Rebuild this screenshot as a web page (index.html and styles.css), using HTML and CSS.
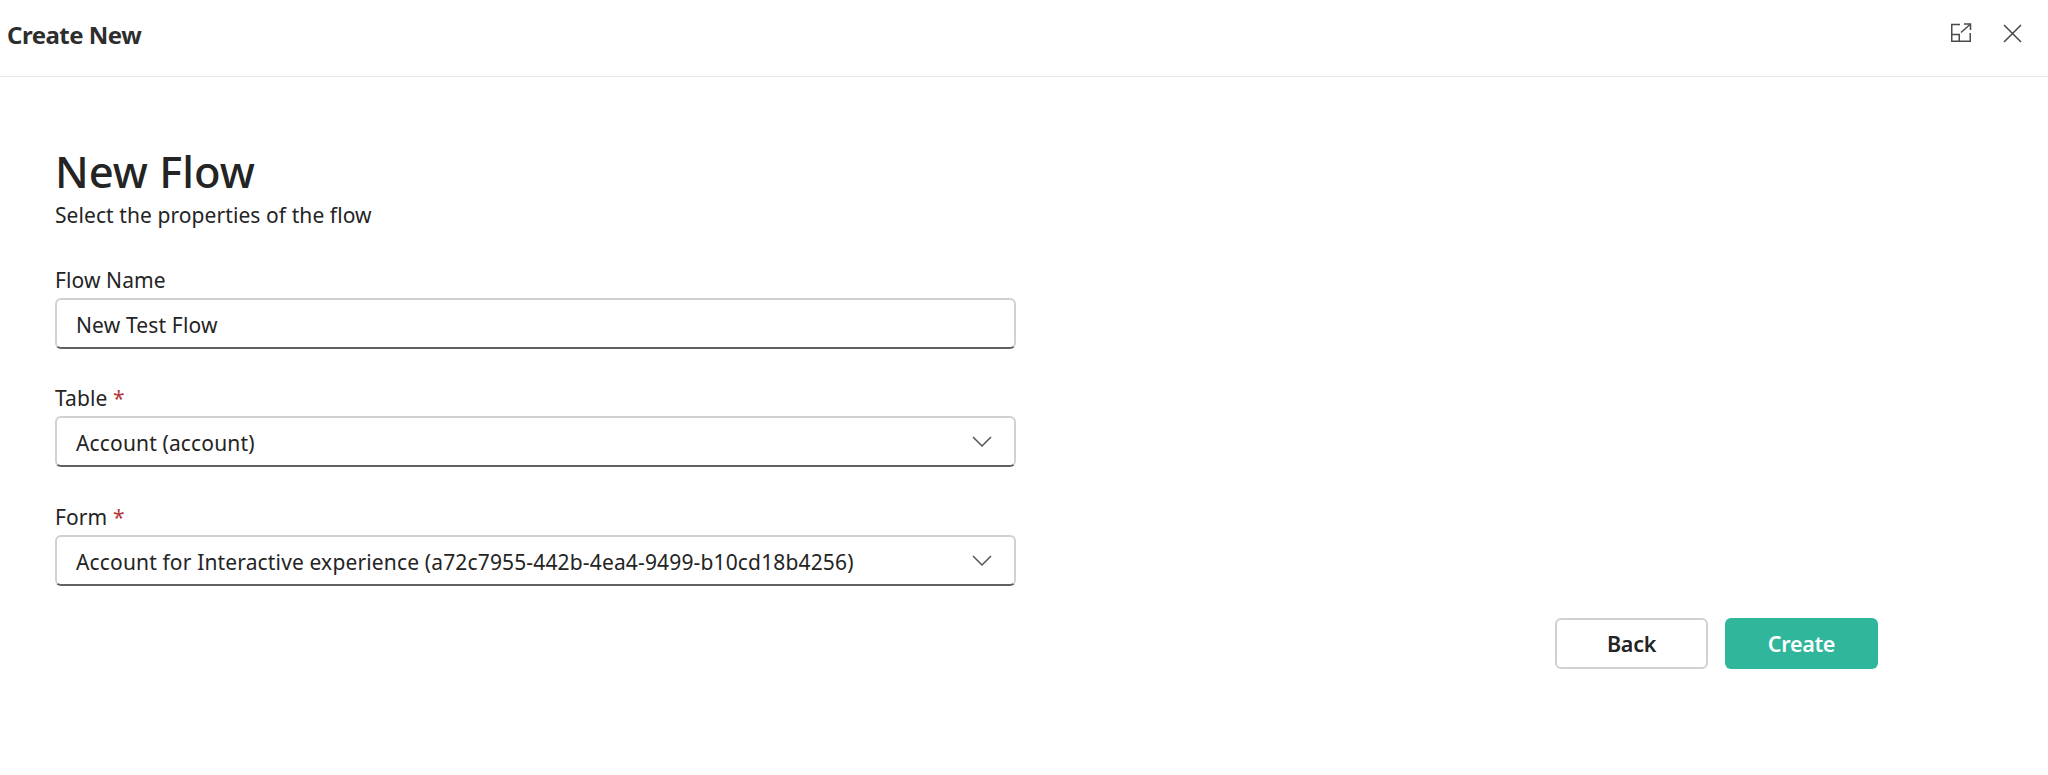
FILE: index.html
```html
<!DOCTYPE html>
<html lang="en">
<head>
<meta charset="utf-8">
<title>Create New</title>
<link rel="stylesheet" href="styles.css">
</head>
<body>
<header class="topbar">
  <div class="topbar-title">Create New</div>
  <div class="topbar-actions">
    <button class="icon-btn" aria-label="Open in new window">
      <svg width="22" height="20" viewBox="0 0 22 20" fill="none" stroke="#4a4a4a" stroke-width="1.5"><path d="M10 1.5H1.75V18.25H20.25V10"/><path d="M1.75 11.5H9.25V18.25"/><path d="M11 9.5L20 1.5"/><path d="M14 1H20.5V7"/></svg>
    </button>
    <button class="icon-btn" aria-label="Close">
      <svg width="19" height="19" viewBox="0 0 19 19" fill="none" stroke="#444" stroke-width="1.5"><path d="M1 1L18 18M18 1L1 18"/></svg>
    </button>
  </div>
</header>
<main class="content">
  <h1 class="heading">New Flow</h1>
  <p class="subheading">Select the properties of the flow</p>
  <div class="field">
    <label class="field-label">Flow Name</label>
    <div class="control"><span class="value">New Test Flow</span></div>
  </div>
  <div class="field">
    <label class="field-label">Table <span class="req">*</span></label>
    <div class="control"><span class="value">Account (account)</span>
      <svg class="chevron" width="20" height="11" viewBox="0 0 20 11" fill="none" stroke="#555" stroke-width="1.5"><path d="M1 1L10 10L19 1"/></svg>
    </div>
  </div>
  <div class="field">
    <label class="field-label">Form <span class="req">*</span></label>
    <div class="control"><span class="value">Account for Interactive experience (a72c7955-442b-4ea4-9499-b10cd18b4256)</span>
      <svg class="chevron" width="20" height="11" viewBox="0 0 20 11" fill="none" stroke="#555" stroke-width="1.5"><path d="M1 1L10 10L19 1"/></svg>
    </div>
  </div>
  <div class="actions">
    <button class="btn btn-secondary">Back</button>
    <button class="btn btn-primary">Create</button>
  </div>
</main>
</body>
</html>
```
FILE: styles.css
```css
* { box-sizing: border-box; }
html, body { margin: 0; height: 100%; background: #fff; overflow: hidden; }
body { font-family: "Noto Sans", "Open Sans", sans-serif; color: #242424; }
.topbar { height: 77px; border-bottom: 1px solid #e6e6e6; display: flex; align-items: center; justify-content: space-between; padding: 0 0 8px 7px; }
.topbar-title { font-size: 24px; font-weight: 700; color: #2e2e2e; letter-spacing: -0.5px; }
.topbar-actions { display: flex; align-items: center; gap: 31px; padding-right: 26px; margin-top: -2px; }
.icon-btn { border: 0; background: none; padding: 0; display: flex; }
.content { padding: 64px 0 0 55px; }
.heading { margin: 0; font-size: 43.5px; line-height: 60px; font-weight: 500; color: #242424; }
.subheading { margin: 0; font-size: 21px; line-height: 28px; letter-spacing: 0.08px; }
.field { margin-top: 37px; width: 961px; }
.field + .field { margin-top: 35.3px; }
.field-label { display: block; font-size: 21px; line-height: 28px; letter-spacing: 0.1px; margin-bottom: 4px; }
.req { color: #b3383a; }
.control { height: 51px; border: 2px solid #d1d1d1; border-bottom-color: #616161; border-radius: 6px; padding-left: 19px; font-size: 21px; letter-spacing: 0.15px; display: flex; align-items: center; justify-content: space-between; padding-right: 22px; }
.value { padding-top: 3px; }
.actions { display: flex; gap: 17px; justify-content: flex-end; width: 1823px; margin-top: 32px; }
.btn { width: 153px; height: 51px; border-radius: 6px; font: 600 21.5px "Noto Sans", "Open Sans", sans-serif; letter-spacing: -0.3px; }
.btn-secondary { background: #fff; border: 2px solid #d1d1d1; color: #242424; }
.btn-primary { background: #2fb69b; border: 0; color: #fff; }
```
